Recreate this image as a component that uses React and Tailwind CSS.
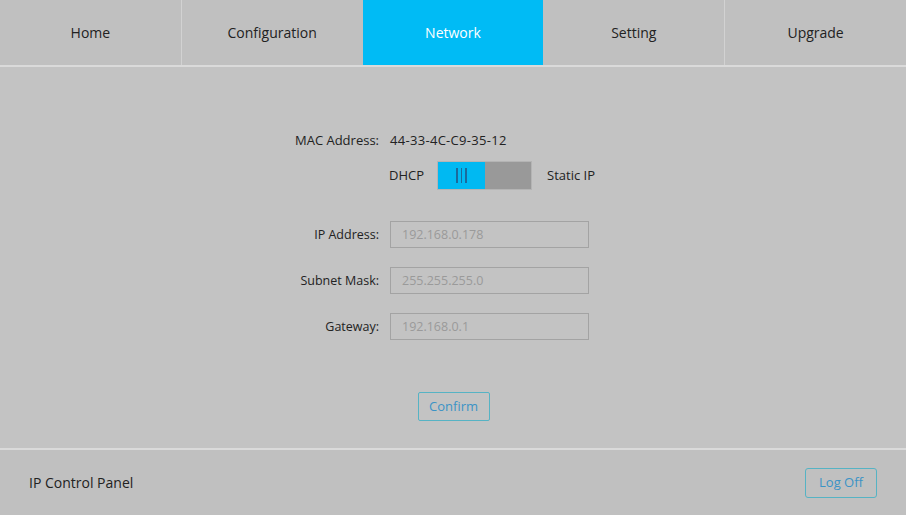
import React from 'react';

const tabs = ['Home', 'Configuration', 'Network', 'Setting', 'Upgrade'];

const fields = [
  { label: 'IP Address:', value: '192.168.0.178' },
  { label: 'Subnet Mask:', value: '255.255.255.0' },
  { label: 'Gateway:', value: '192.168.0.1' },
];

export default function App() {
  return (
    <div
      className="w-[906px] h-[515px] flex flex-col bg-[#c3c3c3] text-[#222]"
      style={{ fontFamily: '"Open Sans", "Noto Sans", sans-serif' }}
    >
      {/* Top tabs */}
      <div className="h-[67px] flex bg-[#c0c0c0] border-b-2 border-[#dadada]">
        {tabs.map((t, i) => (
          <div
            key={t}
            className={
              'flex-1 flex items-center justify-center text-[14px] ' +
              (t === 'Network'
                ? 'bg-[#00bbf5] text-white'
                : 'text-[#222] ' + (i > 0 && tabs[i - 1] !== 'Network' ? 'border-l border-[#d2d2d2]' : ''))
            }
          >
            {t}
          </div>
        ))}
      </div>

      {/* Network form */}
      <div className="flex-1 flex flex-col pt-[63px]">
        <div className="grid grid-cols-[379px_1fr] gap-x-[11px] text-[13px]">
          <div className="text-right h-[20px] leading-[20px]">MAC Address:</div>
          <div className="h-[20px] leading-[20px] tracking-[0.3px]">44-33-4C-C9-35-12</div>

          <div />
          <div className="flex items-center mt-[11px]">
            <span className="-ml-[1px]">DHCP</span>
            <div className="ml-[13px] w-[95px] h-[29px] flex border border-[#b4b4b4] bg-[#999]">
              <div className="w-[47px] h-full bg-[#00b9f2] flex items-center justify-center gap-[3px]">
                <span className="w-[1.5px] h-[15px] bg-[#1b6a9c]" />
                <span className="w-[1.5px] h-[15px] bg-[#1b6a9c]" />
                <span className="w-[1.5px] h-[15px] bg-[#1b6a9c]" />
              </div>
            </div>
            <span className="ml-[15px]">Static IP</span>
          </div>

          {fields.map((f, i) => (
            <React.Fragment key={f.label}>
              <div
                className={
                  'text-right text-[12.5px] h-[27px] leading-[27px] ' + (i === 0 ? 'mt-[31px]' : 'mt-[19px]')
                }
              >
                {f.label}
              </div>
              <div className={i === 0 ? 'mt-[31px]' : 'mt-[19px]'}>
                <div className="w-[199px] h-[27px] border border-[#a3a3a3] px-[11px] leading-[25px] text-[12.5px] text-[#9a9a9a]">
                  {f.value}
                </div>
              </div>
            </React.Fragment>
          ))}
        </div>

        <div className="flex justify-center mt-[52px]">
          <button className="w-[72px] h-[29px] ml-[1px] border border-[#56b3c4] rounded-[2px] text-[13px] text-[#3b93c6]">
            Confirm
          </button>
        </div>
      </div>

      {/* Footer */}
      <div className="h-[67px] flex items-center justify-between border-t-2 border-[#dadada] bg-[#c0c0c0] pl-[29px] pr-[29px]">
        <span className="text-[14px]">IP Control Panel</span>
        <button className="w-[72px] h-[30px] border border-[#56b3c4] rounded-[3px] text-[13px] text-[#3b93c6]">
          Log Off
        </button>
      </div>
    </div>
  );
}
